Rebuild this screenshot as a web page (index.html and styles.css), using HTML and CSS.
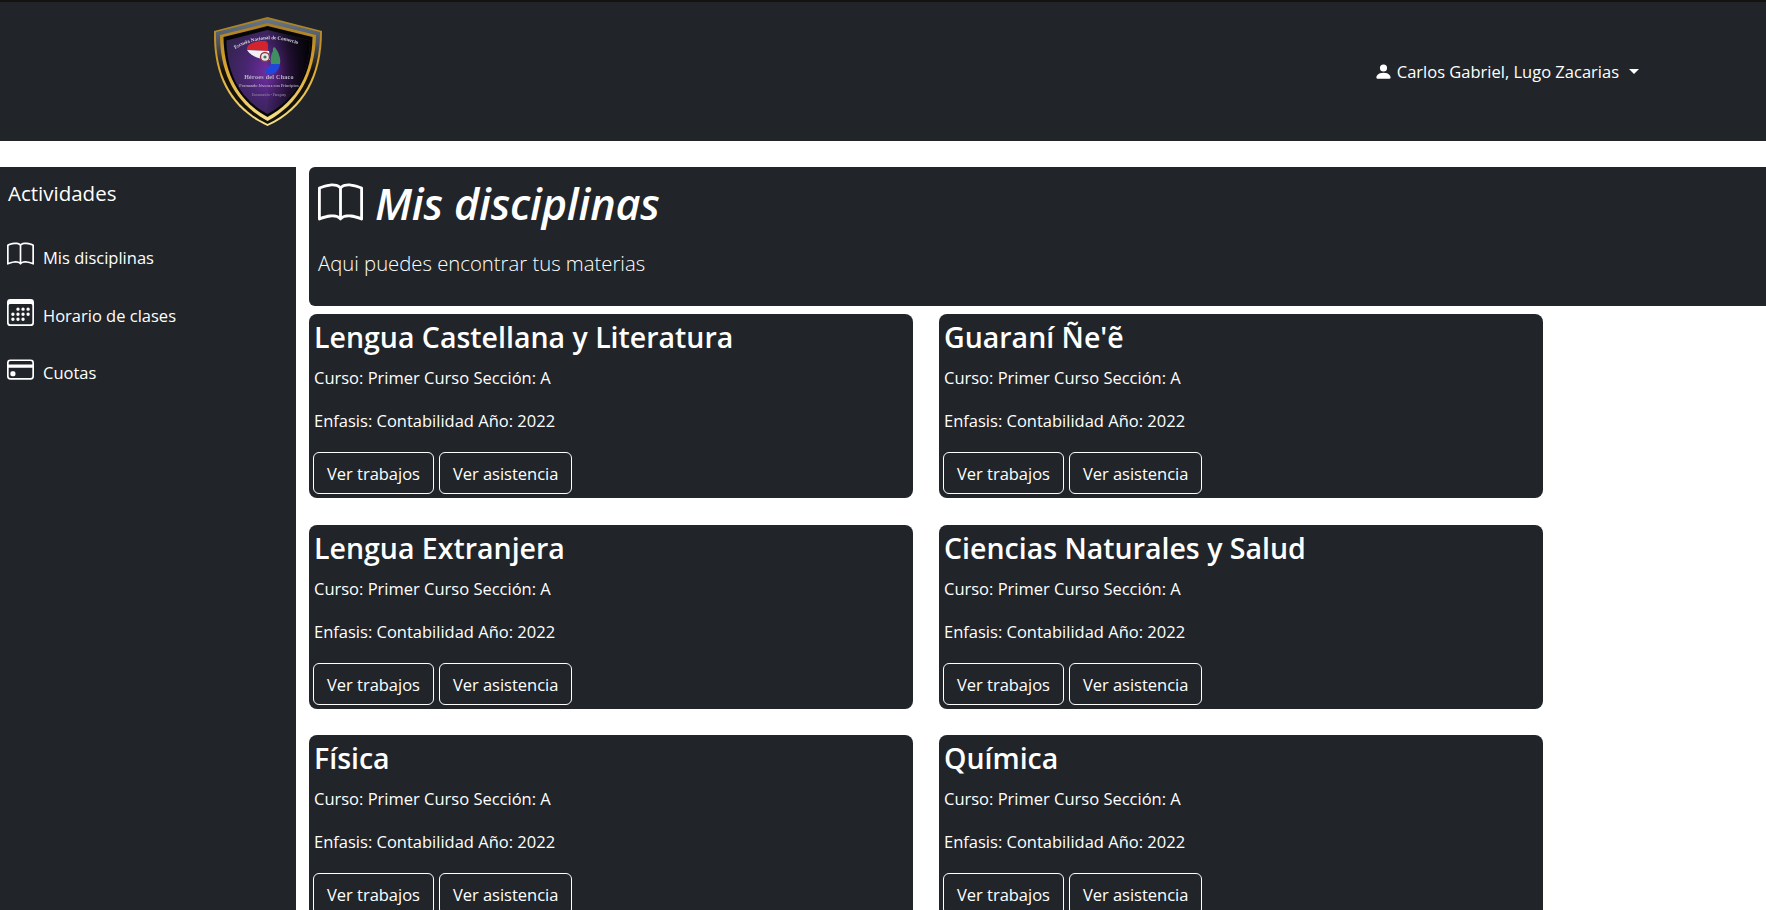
FILE: index.html
```html
<!DOCTYPE html>
<html lang="es">
<head>
<meta charset="utf-8">
<title>Mis disciplinas</title>
<link rel="stylesheet" href="styles.css">
</head>
<body>
<svg class="sprite" width="0" height="0" aria-hidden="true">
  <defs>
    <symbol id="i-book" viewBox="0 0 16 16"><path d="M1 2.828c.885-.37 2.154-.769 3.388-.893 1.33-.134 2.458.063 3.112.752v9.746c-.935-.53-2.12-.603-3.213-.493-1.18.12-2.37.461-3.287.811V2.828zm7.5-.141c.654-.689 1.782-.886 3.112-.752 1.234.124 2.503.523 3.388.893v9.923c-.918-.35-2.107-.692-3.287-.81-1.094-.111-2.278-.039-3.213.492V2.687zM8 1.783C7.015.936 5.587.81 4.287.94c-1.514.153-3.042.672-3.994 1.105A.5.5 0 0 0 0 2.5v11a.5.5 0 0 0 .707.455c.882-.4 2.303-.881 3.68-1.02 1.409-.142 2.59.087 3.223.877a.5.5 0 0 0 .78 0c.633-.79 1.814-1.019 3.222-.877 1.378.139 2.8.62 3.681 1.02A.5.5 0 0 0 16 13.5v-11a.5.5 0 0 0-.293-.455c-.952-.433-2.48-.952-3.994-1.105C10.413.809 8.985.936 8 1.783z"/></symbol>
    <symbol id="i-cal" viewBox="0 0 16 16"><path d="M14 0H2a2 2 0 0 0-2 2v12a2 2 0 0 0 2 2h12a2 2 0 0 0 2-2V2a2 2 0 0 0-2-2zM1 3.857C1 3.384 1.448 3 2 3h12c.552 0 1 .384 1 .857v10.286c0 .473-.448.857-1 .857H2c-.552 0-1-.384-1-.857V3.857z"/><path d="M6.5 7a1 1 0 1 0 0-2 1 1 0 0 0 0 2zm3 0a1 1 0 1 0 0-2 1 1 0 0 0 0 2zm3 0a1 1 0 1 0 0-2 1 1 0 0 0 0 2zm-9 3a1 1 0 1 0 0-2 1 1 0 0 0 0 2zm3 0a1 1 0 1 0 0-2 1 1 0 0 0 0 2zm3 0a1 1 0 1 0 0-2 1 1 0 0 0 0 2zm3 0a1 1 0 1 0 0-2 1 1 0 0 0 0 2zm-9 3a1 1 0 1 0 0-2 1 1 0 0 0 0 2zm3 0a1 1 0 1 0 0-2 1 1 0 0 0 0 2zm3 0a1 1 0 1 0 0-2 1 1 0 0 0 0 2z"/></symbol>
    <symbol id="i-card" viewBox="0 0 16 16"><path d="M0 4a2 2 0 0 1 2-2h12a2 2 0 0 1 2 2v8a2 2 0 0 1-2 2H2a2 2 0 0 1-2-2V4zm2-1a1 1 0 0 0-1 1v1h14V4a1 1 0 0 0-1-1H2zm13 4H1v5a1 1 0 0 0 1 1h12a1 1 0 0 0 1-1V7z"/><path d="M2 10a1 1 0 0 1 1-1h1a1 1 0 0 1 1 1v1a1 1 0 0 1-1 1H3a1 1 0 0 1-1-1v-1z"/></symbol>
    <symbol id="i-user" viewBox="0 0 16 16"><path d="M3 14s-1 0-1-1 1-4 6-4 6 3 6 4-1 1-1 1H3zm5-6a3 3 0 1 0 0-6 3 3 0 0 0 0 6z"/></symbol>
  </defs>
</svg>
<header class="navbar">
  <svg class="logo" viewBox="0 0 108 112" role="img" aria-label="Escudo">
    <defs>
      <linearGradient id="gold" x1="0" y1="0" x2="0" y2="1"><stop offset="0" stop-color="#a67c26"/><stop offset=".45" stop-color="#dba42c"/><stop offset="1" stop-color="#f5e28e"/></linearGradient>
      <linearGradient id="steel" x1="0" y1="0" x2="0" y2="1"><stop offset="0" stop-color="#66788a"/><stop offset=".25" stop-color="#4a5058"/><stop offset=".5" stop-color="#15120c"/><stop offset="1" stop-color="#15120c"/></linearGradient>
      <linearGradient id="shade" x1="0" y1="0" x2="1" y2="0"><stop offset="0" stop-color="#000" stop-opacity=".05"/><stop offset=".5" stop-color="#000" stop-opacity=".6"/><stop offset="1" stop-color="#000" stop-opacity=".95"/></linearGradient>
      <radialGradient id="violet" cx=".56" cy=".5" r=".62"><stop offset="0" stop-color="#7a2fb0"/><stop offset=".55" stop-color="#47256f"/><stop offset="1" stop-color="#33244f"/></radialGradient>
      <path id="logo-arc" d="M21 33 Q53 15 88 30"/>
    </defs>
    <path d="M53.5 1 L108 15 C108 60 91 93 53.5 110 C16 93 -1 60 0 15 Z" fill="url(#gold)"/>
    <path d="M53.5 3 L106 16 C106 59 89 91 53.5 108 C18 91 1 59 2 16 Z" fill="url(#steel)"/>
    <path d="M53.5 7 L102 19 C101 58 85 88 53.5 105 C22 88 6 58 6 19 Z" fill="url(#gold)"/>
    <path d="M53.5 10 L98.500 21 C98 57 83 85 53.5 101 C24 85 10 57 9.500 21 Z" fill="#060608"/>
    <path d="M53.5 14 L96 24.500 C95 58 81 83 53.5 98 C26 83 13 58 12.500 24.500 Z" fill="url(#violet)"/>
    <path d="M53.5 14 L96 24.500 C95 58 81 83 53.5 98 Z" fill="url(#shade)"/>
    <path d="M33 34 C32 28 40 25 50 25 C53 25 54 27 54 30 L54 35 Z" fill="#d4242b"/>
    <path d="M33 34 L55 35 L56 44 C48 44 37 41 33 34 Z" fill="#f1f1f3"/>
    <path d="M51 55 C52 52 55 51 57 48 L66 47 C66 52 63 56 59 58 C56 59 52 58 51 55 Z" fill="#2147d8"/>
    <circle cx="51" cy="41" r="4.500" fill="#e8e8ea" stroke="#8d3a44" stroke-width="1.400"/>
    <circle cx="51" cy="41" r="1.600" fill="#3f7a5a"/>
    <path d="M57 48 C56 43 57 38 59 35 C58 31 61 30 62 33 C65 37 67 43 66 48 Z" fill="#3f8f62"/>
    <text class="logo-arc"><textPath href="#logo-arc">Escuela Nacional de Comercio</textPath></text>
    <text class="logo-t1" x="55" y="63">Héroes del Chaco</text>
    <text class="logo-t2" x="55" y="70.500">Formando Jóvenes con Principios</text>
    <text class="logo-t3" x="55" y="80">Encarnación - Paraguay</text>
  </svg>
  <div class="user">
    <svg class="user-icon" fill="currentColor"><use href="#i-user"/></svg>
    <span>Carlos Gabriel, Lugo Zacarias</span>
    <span class="caret"></span>
  </div>
</header>
<div class="layout">
  <aside class="sidebar">
    <h5 class="side-title">Actividades</h5>
    <ul class="side-list">
      <li class="side-item"><svg class="side-icon" fill="currentColor"><use href="#i-book"/></svg><span>Mis disciplinas</span></li>
      <li class="side-item"><svg class="side-icon" fill="currentColor"><use href="#i-cal"/></svg><span>Horario de clases</span></li>
      <li class="side-item"><svg class="side-icon" fill="currentColor"><use href="#i-card"/></svg><span>Cuotas</span></li>
    </ul>
  </aside>
  <main class="main">
    <section class="hero">
      <h1 class="hero-title"><svg class="hero-icon" fill="currentColor"><use href="#i-book"/></svg><em>Mis disciplinas</em></h1>
      <p class="hero-lead">Aqui puedes encontrar tus materias</p>
    </section>
    <div class="cards">
      <article class="card"><h2>Lengua Castellana y Literatura</h2><p>Curso: Primer Curso Sección: A</p><p>Enfasis: Contabilidad Año: 2022</p><div class="btns"><a class="btn">Ver trabajos</a><a class="btn">Ver asistencia</a></div></article>
      <article class="card"><h2>Guaraní Ñe'ẽ</h2><p>Curso: Primer Curso Sección: A</p><p>Enfasis: Contabilidad Año: 2022</p><div class="btns"><a class="btn">Ver trabajos</a><a class="btn">Ver asistencia</a></div></article>
      <article class="card"><h2>Lengua Extranjera</h2><p>Curso: Primer Curso Sección: A</p><p>Enfasis: Contabilidad Año: 2022</p><div class="btns"><a class="btn">Ver trabajos</a><a class="btn">Ver asistencia</a></div></article>
      <article class="card"><h2>Ciencias Naturales y Salud</h2><p>Curso: Primer Curso Sección: A</p><p>Enfasis: Contabilidad Año: 2022</p><div class="btns"><a class="btn">Ver trabajos</a><a class="btn">Ver asistencia</a></div></article>
      <article class="card"><h2>Física</h2><p>Curso: Primer Curso Sección: A</p><p>Enfasis: Contabilidad Año: 2022</p><div class="btns"><a class="btn">Ver trabajos</a><a class="btn">Ver asistencia</a></div></article>
      <article class="card"><h2>Química</h2><p>Curso: Primer Curso Sección: A</p><p>Enfasis: Contabilidad Año: 2022</p><div class="btns"><a class="btn">Ver trabajos</a><a class="btn">Ver asistencia</a></div></article>
    </div>
  </main>
</div>
</body>
</html>
```

FILE: styles.css
```css
html, body { margin: 0; padding: 0; height: 910px; overflow: hidden; background: #fff; }
body { font-family: "Open Sans", "Noto Sans", sans-serif; font-size: 16.5px; color: #fff; }
.sprite { display: block; height: 0; }
.navbar { height: 139px; background: #212529; border-top: 2px solid #15130f; display: flex; align-items: center; justify-content: space-between; padding: 0 127px 0 214px; }
.logo { width: 108px; height: 112px; display: block; filter: blur(0.4px); }
.logo-arc { font: 700 5px "Liberation Serif", serif; fill: #d8d8e2; }
.logo-t1 { font: 700 6px "Liberation Serif", serif; fill: #bdb9cc; text-anchor: middle; letter-spacing: 0.3px; }
.logo-t2 { font: 400 4.4px "Liberation Serif", serif; fill: #cfccd9; text-anchor: middle; }
.logo-t3 { font: 400 3.6px "Liberation Serif", serif; fill: #9a96aa; text-anchor: middle; }
.user { display: flex; align-items: center; }
.user-icon { width: 19px; height: 19px; margin-right: 4px; }
.caret { width: 0; height: 0; margin-left: 10px; border-top: 5px solid #fff; border-left: 5px solid transparent; border-right: 5px solid transparent; }
.layout { display: flex; margin-top: 26px; gap: 13px; }
.sidebar { width: 296px; height: 743px; flex: none; background: #212529; }
.side-title { margin: 0; padding: 12px 8px 0; font-size: 20.5px; font-weight: 400; line-height: 28px; }
.side-list { list-style: none; margin: 22px 0 0; padding: 0 0 0 7px; }
.side-item { display: flex; align-items: center; height: 57.5px; }
.side-icon { width: 27px; height: 27px; margin-right: 9px; position: relative; top: -3px; }
.main { flex: none; width: 1500px; }
.hero { height: 139px; box-sizing: border-box; background: #212529; border-radius: 6px; padding: 7px 9px 0; margin-bottom: 8px; }
.hero-title { margin: 0; display: flex; align-items: center; font-size: 43.2px; line-height: 60px; font-weight: 600; letter-spacing: -0.2px; }
.hero-icon { width: 45px; height: 45px; margin-right: 12px; position: relative; top: -1px; }
.hero-lead { margin: 14px 0 0; font-size: 20.3px; font-weight: 300; line-height: 30px; }
.cards { display: grid; grid-template-columns: repeat(2, 604px); column-gap: 26px; row-gap: 26.5px; }
.card { height: 184px; box-sizing: border-box; background: #212529; border-radius: 8px; padding: 3px 5px; }
.card h2 { margin: 0; font-size: 28.5px; line-height: 40px; font-weight: 600; }
.card p { margin: 0 0 17px; line-height: 26px; }
.card h2 + p { margin-top: 8px; }
.btns { display: flex; gap: 5px; margin: 18px 0 0 -1px; }
.btn { display: block; height: 42px; box-sizing: border-box; padding: 0 13px; line-height: 41px; border: 1px solid #fff; border-radius: 6px; letter-spacing: -0.02px; }
```
